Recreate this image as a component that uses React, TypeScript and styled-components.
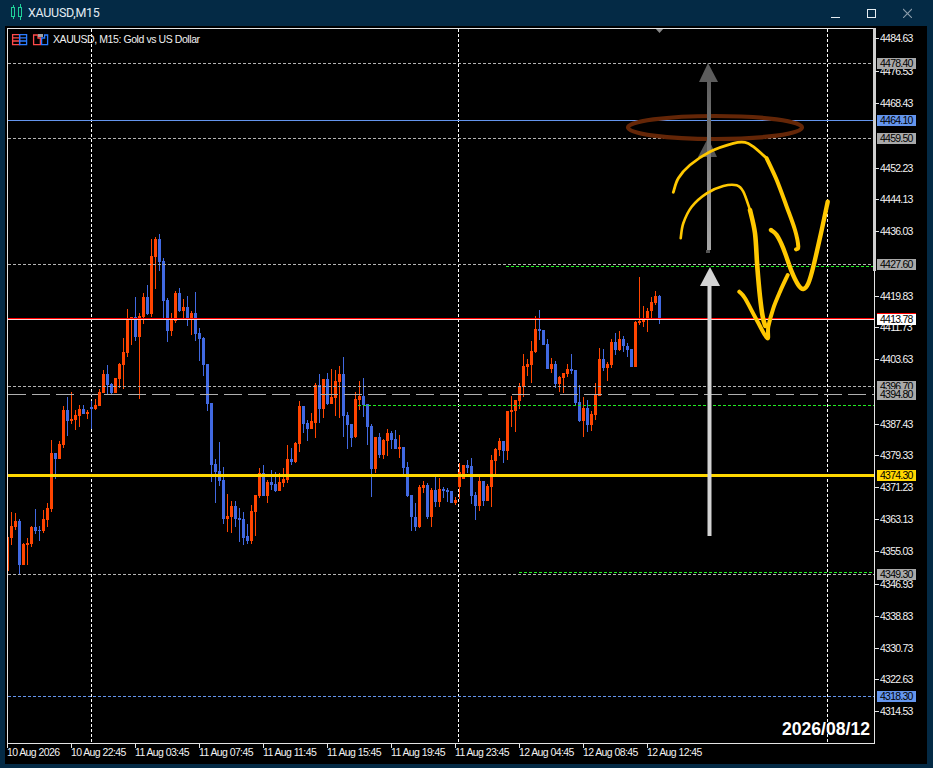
import styled, { createGlobalStyle } from "styled-components";

const GlobalStyle = createGlobalStyle`
  html, body { margin: 0; padding: 0; background: #042a45; }
`;

const Page = styled.div`
  width: 933px;
  height: 768px;
  display: flex;
  flex-direction: column;
  background: #042a45;
  overflow: hidden;
`;

const TitleBar = styled.header`
  height: 26px;
  flex: none;
  display: flex;
  align-items: center;
  padding: 0 21px 2px 11px;
  box-sizing: border-box;
`;

const WindowTitle = styled.span`
  margin-left: 6px;
  font: 12.5px Roboto, "Liberation Sans", sans-serif;
  letter-spacing: -0.3px;
  color: #e2ebf2;
`;

const Controls = styled.div`
  margin-left: auto;
  display: flex;
  gap: 27px;
`;

const ChartPanel = styled.main`
  flex: none;
  width: 922px;
  height: 738px;
  margin-left: 5px;
  background: #000;
`;

const ChartSvg = styled.svg`
  display: block;
`;

const PriceText = styled.text`
  font: 10.5px "Liberation Sans", sans-serif;
  letter-spacing: -0.75px;
  fill: #f2f2f2;
`;

const TagText = styled(PriceText)`
  fill: #000;
`;

const TimeText = styled.text`
  font: 10.5px "Liberation Sans", sans-serif;
  letter-spacing: -0.6px;
  fill: #f2f2f2;
`;

const HeaderText = styled.text`
  font: 10.5px "Liberation Sans", sans-serif;
  letter-spacing: -0.42px;
  fill: #f0f0f0;
`;

const DateStamp = styled.text`
  font: bold 17.6px "Liberation Sans", sans-serif;
  fill: #fff;
`;

// [up?, body top, body bottom, wick top, wick bottom], x = 7 + 4 * index
type Bar = [0 | 1, number, number, number, number];
const bars: Bar[] = [
  [1, 537, 571, 537, 571], [1, 526, 538, 512, 545], [1, 521, 527, 513, 530], [0, 521, 565, 519, 575],
  [1, 544, 565, 543, 565], [1, 543, 545, 538, 565], [1, 527, 544, 526, 547], [0, 527, 531, 509, 534],
  [0, 530, 531, 526, 541], [1, 519, 531, 510, 533], [1, 508, 520, 503, 527], [1, 453, 509, 440, 512],
  [0, 453, 459, 453, 479], [1, 444, 459, 441, 459], [1, 410, 445, 406, 448], [0, 410, 421, 397, 436],
  [1, 419, 421, 392, 424], [1, 415, 420, 410, 430], [1, 409, 416, 405, 427], [0, 409, 414, 405, 414],
  [1, 412, 414, 410, 419], [0, 407, 409, 401, 429], [1, 405, 409, 399, 410], [1, 392, 406, 389, 406],
  [1, 374, 393, 370, 393], [0, 374, 385, 365, 395], [0, 384, 393, 383, 394], [1, 378, 393, 378, 393],
  [1, 364, 379, 363, 388], [1, 352, 365, 338, 389], [1, 318, 353, 309, 357], [1, 317, 319, 317, 345],
  [0, 317, 337, 297, 341], [1, 316, 337, 313, 399], [1, 297, 317, 293, 324], [0, 297, 314, 285, 315],
  [1, 256, 314, 239, 317], [1, 239, 257, 237, 289], [0, 239, 262, 234, 271], [0, 261, 301, 258, 320],
  [0, 300, 331, 298, 342], [1, 320, 331, 313, 336], [1, 293, 321, 291, 323], [0, 293, 311, 288, 312],
  [1, 307, 311, 299, 318], [0, 307, 319, 296, 326], [1, 313, 318, 311, 335], [0, 313, 334, 292, 341],
  [0, 333, 339, 328, 361], [0, 338, 365, 337, 376], [0, 364, 404, 364, 411], [0, 403, 465, 403, 482],
  [0, 464, 472, 459, 503], [0, 471, 481, 442, 486], [0, 480, 519, 467, 524], [1, 516, 519, 494, 532],
  [1, 506, 517, 501, 533], [0, 506, 519, 501, 527], [0, 518, 520, 508, 542], [0, 519, 538, 512, 545],
  [0, 536, 541, 524, 544], [1, 511, 541, 505, 544], [1, 495, 512, 495, 536], [1, 473, 496, 468, 498],
  [0, 473, 496, 465, 496], [1, 482, 496, 480, 503], [0, 482, 485, 470, 490], [0, 484, 491, 472, 492],
  [1, 482, 491, 473, 491], [1, 479, 483, 468, 487], [1, 459, 480, 445, 483], [0, 459, 462, 448, 465],
  [1, 443, 462, 442, 463], [1, 406, 444, 401, 452], [0, 406, 424, 406, 433], [0, 423, 429, 420, 441],
  [1, 421, 429, 413, 429], [1, 385, 423, 383, 438], [0, 385, 409, 374, 423], [1, 379, 409, 379, 418],
  [0, 379, 404, 373, 405], [1, 397, 404, 369, 404], [1, 381, 398, 370, 416], [1, 374, 382, 366, 418],
  [0, 374, 416, 357, 437], [0, 415, 425, 412, 449], [0, 424, 438, 424, 447], [1, 399, 437, 392, 438],
  [1, 396, 400, 381, 410], [0, 396, 405, 378, 417], [0, 404, 427, 404, 445], [0, 426, 469, 424, 497],
  [1, 437, 469, 437, 473], [0, 437, 455, 433, 458], [1, 440, 455, 439, 459], [1, 433, 441, 429, 456],
  [0, 433, 440, 431, 449], [0, 439, 449, 430, 449], [1, 447, 449, 435, 458], [0, 447, 468, 447, 474],
  [0, 467, 496, 462, 497], [0, 495, 517, 495, 531], [0, 517, 527, 503, 531], [1, 487, 527, 485, 528],
  [1, 485, 488, 481, 493], [0, 485, 517, 483, 519], [1, 490, 517, 488, 527], [0, 490, 502, 477, 507],
  [1, 489, 502, 478, 507], [0, 489, 491, 487, 498], [0, 490, 492, 488, 502], [0, 491, 503, 491, 503],
  [1, 500, 503, 497, 505], [1, 472, 487, 463, 499], [1, 465, 479, 465, 479], [0, 465, 468, 460, 473],
  [0, 466, 496, 458, 504], [0, 495, 506, 492, 520], [1, 481, 506, 477, 511], [0, 481, 501, 481, 506],
  [1, 486, 501, 484, 501], [1, 460, 487, 455, 507], [1, 449, 461, 448, 475], [1, 441, 450, 438, 456],
  [0, 441, 451, 441, 463], [1, 411, 451, 411, 460], [1, 410, 412, 396, 427], [1, 400, 411, 400, 432],
  [1, 387, 401, 383, 409], [1, 366, 387, 354, 397], [1, 364, 367, 359, 376], [1, 351, 365, 341, 383],
  [1, 329, 352, 316, 353], [0, 329, 331, 310, 340], [0, 330, 345, 330, 345], [0, 344, 369, 339, 369],
  [1, 364, 369, 358, 373], [0, 364, 384, 361, 388], [1, 377, 384, 376, 392], [1, 373, 378, 373, 393],
  [1, 369, 374, 364, 377], [0, 369, 371, 354, 374], [0, 370, 403, 370, 405], [0, 402, 421, 385, 422],
  [1, 408, 421, 397, 437], [0, 408, 425, 400, 432], [1, 414, 425, 411, 431], [1, 395, 415, 383, 420],
  [1, 359, 396, 348, 396], [0, 359, 368, 349, 371], [1, 364, 368, 362, 381], [1, 342, 365, 339, 368],
  [0, 342, 350, 333, 355], [1, 339, 350, 331, 351], [0, 339, 346, 336, 352], [0, 346, 350, 343, 357],
  [0, 349, 367, 349, 367], [1, 322, 367, 321, 367], [1, 321, 323, 277, 325], [1, 319, 322, 306, 327],
  [1, 311, 320, 308, 332], [1, 302, 311, 297, 319], [1, 296, 303, 291, 305], [0, 296, 320, 295, 324],
];

const priceTicks: [string, number][] = [
  ["4484.63", 38], ["4476.53", 71], ["4468.43", 103], ["4452.23", 168], ["4444.13", 199],
  ["4436.03", 231], ["4419.83", 296], ["4411.73", 327], ["4403.63", 359], ["4387.43", 424], ["4379.33", 455],
  ["4371.23", 487], ["4363.13", 519], ["4355.03", 551], ["4346.93", 584], ["4338.83", 616], ["4330.73", 648],
  ["4322.63", 679], ["4314.53", 711],
];

const priceTags: [string, number, string][] = [
  ["4478.40", 63, "#a9a9a9"], ["4464.10", 120, "#6495ed"], ["4459.50", 138, "#a9a9a9"],
  ["4427.60", 264, "#a9a9a9"], ["4413.78", 319, "#fff"], ["4396.70", 386, "#a9a9a9"],
  ["4394.80", 394, "#a9a9a9"], ["4374.30", 475, "#ffd700"], ["4349.30", 574, "#a9a9a9"],
  ["4318.30", 696, "#6495ed"],
];

const timeLabels = [
  "10 Aug 2026", "10 Aug 22:45", "11 Aug 03:45", "11 Aug 07:45", "11 Aug 11:45", "11 Aug 15:45",
  "11 Aug 19:45", "11 Aug 23:45", "12 Aug 04:45", "12 Aug 08:45", "12 Aug 12:45",
];

type Pt = [number, number];

// catmull-rom through the hand drawn points
const smooth = (p: Pt[]) => {
  let d = `M${p[0][0]} ${p[0][1]}`;
  for (let i = 0; i < p.length - 1; i++) {
    const a = p[Math.max(i - 1, 0)];
    const b = p[i];
    const c = p[i + 1];
    const e = p[Math.min(i + 2, p.length - 1)];
    d += `C${b[0] + (c[0] - a[0]) / 6} ${b[1] + (c[1] - a[1]) / 6} ${c[0] - (e[0] - b[0]) / 6} ${c[1] - (e[1] - b[1]) / 6} ${c[0]} ${c[1]}`;
  }
  return d;
};

const strokes: [Pt[], number][] = [
  [[[673.3, 192.3], [678.3, 178.3], [690, 165], [710, 151.7], [733.3, 143.3], [745, 142.3], [753.3, 146.7], [766.7, 158.3]], 2.8],
  [[[766.7, 158.3], [776.7, 180], [786.7, 206.7], [795, 230], [798.3, 246.7], [796, 249.3]], 4],
  [[[680.7, 238.3], [683.3, 223.3], [691.7, 206.7], [706.7, 193.3], [723.3, 186], [736.7, 185.3], [743.3, 191.7], [750, 210]], 2.6],
  [[[750, 210], [755, 233.3], [757.3, 266.7], [760, 296.7], [762.7, 316.7], [765.3, 326]], 4.6],
  [[[739.3, 291.7], [745, 298.3], [756.7, 320], [767.3, 338.3], [768.3, 326.7], [773.3, 308.3], [780, 291.7], [787.7, 275]], 4],
  [[[771, 230], [776.7, 235], [783.3, 248.3], [791.7, 271.7], [798.3, 285], [803.3, 289], [808.3, 283.3], [813.3, 266.7], [821.7, 230], [827.7, 201.7]], 4.4],
];

const CandleIcon = () => (
  <svg width="11" height="16" viewBox="0 0 11 16" fill="none" stroke="#1fd19a" strokeWidth="1" shapeRendering="crispEdges">
    <path d="M.5 3.5h3v9h-3zM2 1v2.5M2 12.5V15M7.5 3.5h3v9h-3zM9 0v3.5M9 12.5V16" />
  </svg>
);

const MinimizeIcon = () => (
  <svg width="9" height="12" viewBox="0 0 9 12" shapeRendering="crispEdges">
    <path d="M0 11h9v1H0z" fill="#e6edf2" />
  </svg>
);

const MaximizeIcon = () => (
  <svg width="9" height="12" viewBox="0 0 9 12" fill="none" shapeRendering="crispEdges">
    <path d="M.5 3.5h8v8h-8z" stroke="#e6edf2" />
  </svg>
);

const CloseIcon = () => (
  <svg width="9" height="12" viewBox="0 0 9 12" fill="none">
    <path d="M0 3l9 9M9 3l-9 9" stroke="#8b9cab" strokeWidth="1.1" />
  </svg>
);

const Candles = () => (
  <g shapeRendering="crispEdges">
    {bars.map(([up, top, bottom, high, low], i) => {
      const x = 7 + 4 * i;
      const color = up ? "#ff4500" : "#4169e1";
      return (
        <g key={i} fill={color}>
          <rect x={x} y={high} width={1} height={low - high} />
          {x > 7 && <rect x={x - 1} y={top} width={3} height={bottom - top} />}
          {x === 7 && <rect x={8} y={top} width={1} height={bottom - top} />}
        </g>
      );
    })}
  </g>
);

const HeaderIcons = () => (
  <g fill="none" strokeWidth={1.3}>
    <path d="M12.6 34.6h7v10h-7zM12.6 37.8h7M12.6 41h7" stroke="#ff4a4a" />
    <path d="M19.6 34.6h7v10h-7zM19.6 37.8h7M19.6 41h7" stroke="#2b7cff" />
    <path d="M33.6 35h4.4v3h2.4v6.6h-6.8z" stroke="#ff4a4a" />
    <path d="M41.6 44.6v-6.6h3v-3h3v9.6z" stroke="#2b7cff" />
    <path d="M38 34h5v3h-5z" fill="#a0a0a0" stroke="none" />
  </g>
);

const Annotations = () => (
  <g>
    <defs>
      <linearGradient id="ghostShaft" x1="0" y1="80" x2="0" y2="250" gradientUnits="userSpaceOnUse">
        <stop offset="0" stopColor="#5e5e5e" />
        <stop offset="1" stopColor="#a8a8a8" />
      </linearGradient>
    </defs>
    <ellipse cx={715} cy={127.5} rx={87} ry={11.5} fill="none" stroke="#642607" strokeWidth={4.2} />
    <polygon points="708,138 698,157 717,157" fill="#555" />
    <polygon points="708,63 699,82 718,82" fill="#5c5c5c" />
    <rect x={706} y={250} width={4} height={3} fill="#555" />
    <rect x={707} y={80} width={4} height={170} fill="url(#ghostShaft)" />
    <polygon points="710,267 700,286 720,286" fill="#d3d3d3" />
    <rect x={707.5} y={286} width={4} height={250} fill="#d3d3d3" />
    {strokes.map(([pts, width], i) => (
      <path key={i} d={smooth(pts)} fill="none" stroke="#ffc800" strokeWidth={width} strokeLinecap="round" strokeLinejoin="round" />
    ))}
  </g>
);

export default function App() {
  const ticksX = timeLabels.map((_, i) => 7 + 64 * i);
  return (
    <Page>
      <GlobalStyle />
      <TitleBar>
        <CandleIcon />
        <WindowTitle>XAUUSD,M15</WindowTitle>
        <Controls>
          <MinimizeIcon />
          <MaximizeIcon />
          <CloseIcon />
        </Controls>
      </TitleBar>
      <ChartPanel>
        <ChartSvg width={922} height={738} viewBox="5 26 922 738">
          <g stroke="#fff" strokeDasharray="3 2" shapeRendering="crispEdges">
            <path d="M91.5 29V743M458.5 29V743M827.5 29V743" />
          </g>
          <Candles />
          <g fill="none" shapeRendering="crispEdges">
            <path d="M8 63.5H874M8 138.5H874M8 264.5H874M8 386.5H874M8 574.5H874" stroke="#b4b4b4" strokeDasharray="3 2" />
            <path d="M8 394.5H874" stroke="#b0b0b0" strokeDasharray="18 6" />
            <path d="M506 266.5H874M358 405.5H874M519 572.5H874" stroke="#22ee22" strokeDasharray="3 2" />
            <path d="M8 696.5H874" stroke="#6495ed" strokeDasharray="3 2" />
            <path d="M8 120.5H874" stroke="#6495ed" />
            <path d="M8 318.5H874" stroke="#ff0000" />
            <path d="M8 319.5H874" stroke="#ffd9d9" />
            <rect x={8} y={474} width={866} height={3} fill="#ffd700" />
          </g>
          <polygon points="655,28 664,28 659.5,33" fill="#8a8a8a" />
          <Annotations />
          <g shapeRendering="crispEdges" fill="none" stroke="#e4e4e4">
            <path d="M7.5 28V743M7 28.5H875M7 743.5H875M874.5 28V744" />
            <path d="M874.5 28V270.5" strokeWidth={3} stroke="#d0d0d0" />
            {priceTicks.map(([, y]) => (
              <path key={y} d={`M875 ${y + 0.5}H879`} />
            ))}
            {ticksX.map((x) => (
              <path key={x} d={`M${x + 0.5} 744V748`} />
            ))}
          </g>
          {priceTicks.map(([label, y]) => (
            <PriceText key={label} x={880} y={y + 4}>{label}</PriceText>
          ))}
          {ticksX.map((x, i) => (
            <TimeText key={x} x={x} y={756}>{timeLabels[i]}</TimeText>
          ))}
          {priceTags.map(([label, y, bg]) => (
            <g key={label}>
              <rect x={877} y={y - 5} width={39} height={11} fill={bg} shapeRendering="crispEdges" />
              <TagText x={880} y={y + 4}>{label}</TagText>
            </g>
          ))}
          <rect x={877} y={313} width={39} height={1} fill="#ff0000" shapeRendering="crispEdges" />
          <HeaderIcons />
          <HeaderText x={53} y={43}>XAUUSD, M15:  Gold vs US Dollar</HeaderText>
          <DateStamp x={870} y={735} textAnchor="end">2026/08/12</DateStamp>
        </ChartSvg>
      </ChartPanel>
    </Page>
  );
}
